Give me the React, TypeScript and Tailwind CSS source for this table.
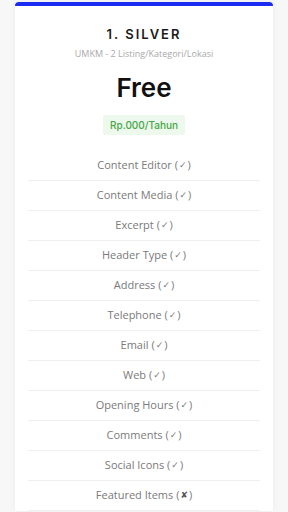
import React from 'react';

const features: [string, boolean][] = [
  ['Content Editor', true],
  ['Content Media', true],
  ['Excerpt', true],
  ['Header Type', true],
  ['Address', true],
  ['Telephone', true],
  ['Email', true],
  ['Web', true],
  ['Opening Hours', true],
  ['Comments', true],
  ['Social Icons', true],
  ['Featured Items', false],
];

const App = () => {
  return (
    <div className="min-h-[512px] h-[512px] overflow-hidden bg-[#f7f7f7] pt-[2px]">
      <div className="mx-[15px] bg-white border-t-4 border-[#1a2cf2] rounded-t-[4px] shadow-[0_0_6px_rgba(0,0,0,0.05)] px-[13px]">
        <div className="flex flex-col items-center pt-[19px]">
          <h2 className="font-['Inter',sans-serif] font-semibold text-[13px] leading-[18px] tracking-[2px] text-[#1b1b1b]">
            1. SILVER
          </h2>
          <p className="mt-[6px] font-['Open_Sans',sans-serif] text-[9px] leading-[10px] text-[#a9a9a9]">
            UMKM - 2 Listing/Kategori/Lokasi
          </p>
          <div className="mt-[13px] font-['Inter',sans-serif] font-semibold text-[26px] leading-[32px] text-[#111]">
            Free
          </div>
          <span className="mt-[11px] h-[20px] px-[7px] flex items-center rounded-[3px] bg-[#edf9ec] font-['Inter',sans-serif] font-medium text-[10px] text-[#45a548]">
            Rp.000/Tahun
          </span>
        </div>
        <ul className="mt-[16px]">
          {features.map(([name, ok]) => (
            <li
              key={name}
              className="h-[30px] flex items-center justify-center border-b border-[#efefef] font-['Open_Sans',sans-serif] text-[11px] text-[#7a7a7a]"
            >
              {name} (
              {ok ? (
                <span className="font-['DejaVu_Sans',sans-serif] text-[9px] mx-[1px]">✓</span>
              ) : (
                <span className="font-['DejaVu_Sans',sans-serif] font-bold text-[9px] text-[#555] mx-[1px]">✘</span>
              )}
              )
            </li>
          ))}
        </ul>
      </div>
    </div>
  );
};

export default App;
